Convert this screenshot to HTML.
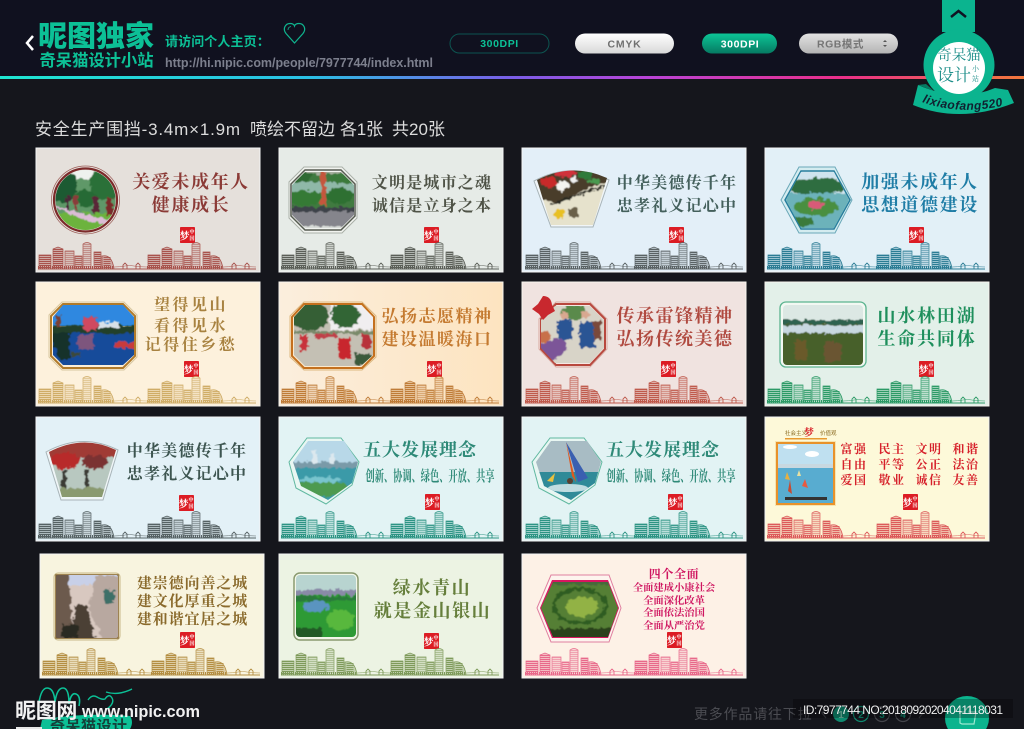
<!DOCTYPE html>
<html lang="zh"><head><meta charset="utf-8"><title>安全生产围挡</title>
<style>
html,body{margin:0;padding:0;background:#15161c;overflow:hidden}
svg{display:block}
.s{font-family:"Liberation Serif","Noto Serif CJK SC",serif;font-weight:700;text-anchor:middle}
.g{font-family:"Liberation Sans","Noto Sans CJK SC",sans-serif}
.l{font-size:18px;letter-spacing:1.6px}
.m{font-size:16px;letter-spacing:1.2px}
.st{font-family:"Noto Serif CJK SC",serif;font-weight:700;fill:#fff}
</style></head><body>
<svg xmlns="http://www.w3.org/2000/svg" width="1024" height="729" viewBox="0 0 1024 729">
<defs>
<linearGradient id="rb" x1="0" x2="1" y1="0" y2="0"><stop offset="0" stop-color="#1fe6d2"/><stop offset=".3" stop-color="#2ac0e6"/><stop offset=".5" stop-color="#7a5ee8"/><stop offset=".63" stop-color="#b844d8"/><stop offset=".82" stop-color="#ea2f8a"/><stop offset="1" stop-color="#f2783c"/></linearGradient>
<linearGradient id="pw" x1="0" x2="0" y1="0" y2="1"><stop offset="0" stop-color="#fff"/><stop offset="1" stop-color="#d8d8d8"/></linearGradient>
<linearGradient id="pg" x1="0" x2="0" y1="0" y2="1"><stop offset="0" stop-color="#0cc596"/><stop offset="1" stop-color="#067a62"/></linearGradient>
<linearGradient id="pr" x1="0" x2="0" y1="0" y2="1"><stop offset="0" stop-color="#e2e2e2"/><stop offset="1" stop-color="#b4b4b4"/></linearGradient>
<linearGradient id="o6" x1="0" x2="1" y1="0" y2="0"><stop offset="0" stop-color="#fbeedd"/><stop offset="1" stop-color="#fde4c0"/></linearGradient>
<filter id="bl" x="-5%" y="-5%" width="110%" height="110%"><feTurbulence type="fractalNoise" baseFrequency=".22" numOctaves="2" seed="4" result="n"/><feDisplacementMap in="SourceGraphic" in2="n" scale="7" xChannelSelector="R" yChannelSelector="G"/><feGaussianBlur stdDeviation=".45"/></filter>
<g id="blk">
<g fill="currentColor" opacity=".38"><rect x="1" y="13" width="12" height="14"/><path d="M15 7l5-2 5 2v20H15z"/><rect x="27" y="9" width="9" height="18" opacity=".6"/><rect x="37" y="14" width="7" height="13" opacity=".8"/><path d="M45 2q4-3 8 0v25h-8z" opacity=".5"/><rect x="56" y="10" width="7" height="17"/><path d="M64 27V14q10-2 12 13z"/></g>
<g fill="none" stroke="currentColor">
<path d="M1 13h12v14H1z" stroke-width=".7"/><path d="M7 13v14" stroke-width="12" stroke-dasharray="1 1"/>
<path d="M15 7l5-2 5 2v20H15z" stroke-width=".7"/><path d="M20 7v20" stroke-width="10" stroke-dasharray="1 1"/>
<path d="M27 9h9v18h-9z" stroke-width=".7"/><path d="M31.500 9v18" stroke-width="8" stroke-dasharray=".7 1.300" opacity=".6"/>
<path d="M37 14h7v13h-7z" stroke-width=".7"/><path d="M40.500 14v13" stroke-width="6" stroke-dasharray="1 1" opacity=".8"/>
<path d="M45 2q4-3 8 0v25h-8z" stroke-width=".7"/><path d="M49 2v25" stroke-width="7" stroke-dasharray=".7 1.300" opacity=".6"/>
<path d="M56 10h7v17h-7z" stroke-width=".7"/><path d="M59.500 10v17" stroke-width="6" stroke-dasharray="1 1"/>
<path d="M64 27V14q10-2 12 13z" stroke-width=".8"/><path d="M69 15v12" stroke-width="7" stroke-dasharray="1 1" opacity=".9"/>
<path d="M0 27h109" stroke-width="1"/>
<path d="M76 25q6 0 11-1t9 0q5 1 13 1" stroke-width=".5"/>
<path d="M85 27v-4l2-2 2 2v4M98 27v-4l2-2 2 2v4" stroke-width=".9"/>
<path d="M0 25.500h76" stroke-width="3" stroke-dasharray="1 1"/>
</g></g>
<g id="sk"><use href="#blk"/><use href="#blk" x="109"/></g>
<g id="stamp"><rect width="15" height="16" rx=".8" fill="#dc1c24"/><text class="st" x="-.5" y="12.500" font-size="10">梦</text><text class="st" x="9.500" y="6.500" font-size="5">中</text><text class="st" x="9.500" y="13" font-size="5">国</text></g>
<clipPath id="c1"><circle cx="85.500" cy="200" r="30"/></clipPath>
<clipPath id="c2"><path d="M305 172h36l13 13v30l-13 13h-36l-13-13v-30z"/></clipPath>
<clipPath id="c3"><path d="M537 180q35-18 70-2l-14 47h-42z"/></clipPath>
<clipPath id="c4"><path d="M786 200l15-28h33l15 28-15 28h-33z"/></clipPath>
<clipPath id="c5"><path d="M63 305h60l11 12v38l-11 10H63l-10-10v-38z"/></clipPath>
<clipPath id="c6"><path d="M305 305h56l12 12v38l-12 11h-56l-11-11v-38z"/></clipPath>
<clipPath id="c7"><path d="M555 306h35l14 14v28l-14 15h-35l-14-15v-28z"/></clipPath>
<clipPath id="c8"><rect x="783" y="305" width="80" height="60" rx="4"/></clipPath>
<clipPath id="c9"><path d="M49 452q34-18 67-2l-14 47H62z"/></clipPath>
<clipPath id="c10"><path d="M293 462l15-21h36l14 21-6 21-24 17-27-14z"/></clipPath>
<clipPath id="c11"><path d="M536 462l15-21h36l14 21-6 21-24 17-27-14z"/></clipPath>
<clipPath id="c13"><rect x="56" y="575" width="62" height="63" rx="2"/></clipPath>
<clipPath id="c14"><rect x="296" y="575" width="60" height="62" rx="4"/></clipPath>
<clipPath id="c15"><path d="M541 608l12-26h55l10 26-10 29h-55z"/></clipPath>
</defs>

<rect width="1024" height="729" fill="#15161c"/>
<rect width="1024" height="76" fill="#10111f"/>
<rect y="76" width="1024" height="3" fill="url(#rb)"/>

<!-- header -->
<path d="M33 36l-6 7 6 7" fill="none" stroke="#fff" stroke-width="2.500"/>
<text class="g" x="38" y="46" font-size="29" font-weight="900" fill="#0cc096">昵图独家</text>
<text class="g" x="39.500" y="66" font-size="16.300" font-weight="700" fill="#0cc096">奇呆猫设计小站</text>
<text class="g" x="165" y="46" font-size="13" font-weight="700" fill="#0cc096" letter-spacing=".1">请访问个人主页：</text>
<text class="g" x="165" y="67" font-size="12.500" font-weight="700" fill="#7c7f8d" textLength="268">http://hi.nipic.com/people/7977744/index.html</text>
<path d="M294.500 43L286 33.500C282 28 286 23.500 290 23.500C292.500 23.500 294 24.500 294.500 26C295 24.500 296.500 23.500 299 23.500C303 23.500 307 28 303 33.500Z" fill="none" stroke="#0fb58f" stroke-width="1.200"/>
<path d="M288 30q0-3 3-3.500" fill="none" stroke="#0fb58f" stroke-width=".8"/>

<rect x="450" y="34" width="99" height="19" rx="9.500" fill="none" stroke="#0d5450"/>
<text class="g" x="499.500" y="47" font-size="10.500" font-weight="700" fill="#0cc096" text-anchor="middle" letter-spacing=".6">300DPI</text>
<rect x="575" y="33.500" width="99" height="20" rx="10" fill="url(#pw)"/>
<text class="g" x="624.500" y="47.500" font-size="10.500" font-weight="700" fill="#707070" text-anchor="middle" letter-spacing=".8">CMYK</text>
<rect x="702" y="33.500" width="75" height="20" rx="10" fill="url(#pg)"/>
<text class="g" x="740" y="47.500" font-size="10.500" font-weight="700" fill="#fff" text-anchor="middle" letter-spacing=".6">300DPI</text>
<rect x="799" y="33.500" width="99" height="20" rx="10" fill="url(#pr)"/>
<text class="g" x="817" y="47.500" font-size="10.500" font-weight="700" fill="#757575" letter-spacing=".5">RGB模式</text>
<path d="M883 42l2-2 2 2zM883 45l2 2 2-2z" fill="#555"/>

<!-- badge -->
<rect x="942" y="0" width="33" height="32" fill="#0bb48f"/>
<path d="M951 17l7.500-6 7.500 6" fill="none" stroke="#101322" stroke-width="2.500"/>
<path d="M918 85L913 105Q960 124 1014 103L1008 90 995 88Q960 103 918 85z" fill="#0bb48f"/>
<path d="M918 85l8-1 8 7z" fill="#067a62"/>
<circle cx="959" cy="65" r="35.500" fill="#0bb48f"/>
<circle cx="959" cy="68" r="26" fill="#fff"/>
<text x="959" y="60" font-size="14.500" text-anchor="middle" fill="#1b8d88" font-family="Noto Serif CJK SC,serif">奇呆猫</text>
<text x="937" y="81" font-size="17" fill="#1b8d88" font-family="Noto Serif CJK SC,serif">设计</text>
<text x="972" y="71" font-size="7" fill="#1b8d88" font-family="Noto Serif CJK SC,serif">小</text>
<text x="972" y="81" font-size="7" fill="#1b8d88" font-family="Noto Serif CJK SC,serif">站</text>
<path id="rbn" d="M922 102Q960 116 1006 105" fill="none"/>
<text class="g" font-size="12" font-weight="700" fill="#102030" font-style="italic" letter-spacing=".5"><textPath href="#rbn">lixiaofang520</textPath></text>

<!-- title -->
<text class="g" x="35" y="135" font-size="17" fill="#dcdcdc" textLength="205">安全生产围挡-3.4m×1.9m</text>
<text class="g" x="250" y="135" font-size="17" fill="#dcdcdc" textLength="85">喷绘不留边</text>
<text class="g" x="340" y="135" font-size="17" fill="#dcdcdc" textLength="43">各1张</text>
<text class="g" x="392" y="135" font-size="17" fill="#dcdcdc" textLength="53">共20张</text>

<!-- CARD 1 -->
<rect x="36" y="148" width="224" height="124" fill="#e5e0db" stroke="#f4f4f4"/>
<circle cx="85.500" cy="200" r="34" fill="none" stroke="#9a5a55" stroke-width=".7"/>
<circle cx="85.500" cy="200" r="31.500" fill="none" stroke="#7c2a2a" stroke-width="2.200"/>
<g clip-path="url(#c1)"><g filter="url(#bl)"><rect x="45" y="160" width="82" height="80" fill="#5f9868"/><rect x="72" y="165" width="22" height="14" fill="#eef2ee"/><ellipse cx="62" cy="186" rx="15" ry="17" fill="#1f5a30"/><ellipse cx="106" cy="184" rx="16" ry="16" fill="#2c7038"/><ellipse cx="85" cy="198" rx="12" ry="8" fill="#276a34"/><rect x="45" y="213" width="82" height="27" fill="#6cb33c"/><path d="M55 205q30 10 65 17v5q-32-3-65-20z" fill="#dcbcd6"/><rect x="66" y="195" width="4" height="14" fill="#4a2838"/><rect x="73" y="196" width="4" height="13" fill="#8a3a3a"/><rect x="93" y="197" width="6" height="16" fill="#5a2838"/><rect x="106" y="197" width="7" height="18" fill="#7a2a2a"/></g></g>
<text class="s l" x="191" y="188" fill="#8b3a36">关爱未成年人</text>
<text class="s l" x="191" y="211" fill="#8b3a36">健康成长</text>
<use href="#stamp" x="180" y="227"/>
<use href="#sk" x="38" y="242" style="color:#a8524c"/>

<!-- CARD 2 -->
<rect x="279" y="148" width="224" height="124" fill="#e6ebe7" stroke="#f4f4f4"/>
<path d="M304 167h38l15 15v36l-15 15h-38l-15-15v-36z" fill="#f1f3ef" stroke="#aab0a8"/>
<path d="M305 170h36l14 14v32l-14 14h-36l-14-14v-32z" fill="none" stroke="#555b50" stroke-width="1.500"/>
<g clip-path="url(#c2)"><g filter="url(#bl)"><rect x="285" y="165" width="76" height="70" fill="#3f7a40"/><rect x="285" y="165" width="76" height="9" fill="#a8b0a0"/><rect x="285" y="182" width="76" height="10" fill="#8fb8a8"/><ellipse cx="300" cy="177" rx="12" ry="5" fill="#2f6a30"/><ellipse cx="342" cy="178" rx="12" ry="5" fill="#3a7a3a"/><ellipse cx="305" cy="198" rx="16" ry="8" fill="#357a34"/><ellipse cx="340" cy="196" rx="14" ry="8" fill="#2f7030"/><rect x="321" y="171" width="5" height="34" fill="#c4563c"/><rect x="285" y="207" width="76" height="5" fill="#3c4248"/><rect x="285" y="212" width="76" height="14" fill="#85858c"/><rect x="285" y="226" width="76" height="8" fill="#d8dcd8"/></g></g>
<text class="s m" x="432" y="188" fill="#4f5347">文明是城市之魂</text>
<text class="s m" x="432" y="211" fill="#4f5347">诚信是立身之本</text>
<use href="#stamp" x="424" y="227"/>
<use href="#sk" x="281" y="242" style="color:#5b5f58"/>

<!-- CARD 3 -->
<rect x="522" y="148" width="224" height="124" fill="#e3eff8" stroke="#f4f4f4"/>
<path d="M534 181q37-20 75-1l-16 47h-42z" fill="#f0f5f8" stroke="#a8b4b8"/>
<g clip-path="url(#c3)"><g filter="url(#bl)"><rect x="532" y="165" width="80" height="65" fill="#e6e2cc"/><path d="M532 165h80v15q-20 6-30 11t-24 12l-26-6z" fill="#4a3c2a"/><ellipse cx="549" cy="182" rx="9" ry="5" fill="#c82c2c"/><ellipse cx="566" cy="173" rx="11" ry="4" fill="#d0303a"/><ellipse cx="585" cy="175" rx="8" ry="4" fill="#2e7a3a"/><ellipse cx="562" cy="186" rx="7" ry="5" fill="#f4f4f0"/><ellipse cx="594" cy="181" rx="6" ry="3" fill="#4a9a50"/><ellipse cx="574" cy="180" rx="4" ry="3" fill="#f0f0f0"/><path d="M551 205q20-8 56-20" stroke="#2a2a24" stroke-width="2.500" fill="none"/><circle cx="559" cy="214" r="5" fill="#e8c020"/><rect x="569" y="208" width="9" height="9" fill="#6a604a"/></g></g>
<text class="s m" x="677" y="188" fill="#44605c">中华美德传千年</text>
<text class="s m" x="677" y="211" fill="#44605c">忠孝礼义记心中</text>
<use href="#stamp" x="669" y="227"/>
<use href="#sk" x="525" y="242" style="color:#5a6264"/>

<!-- CARD 4 -->
<rect x="765" y="148" width="224" height="124" fill="#e2f0f7" stroke="#f4f4f4"/>
<path d="M781 200l18-33h36l17 33-17 33h-36z" fill="#d4ecf0" stroke="#6aa8b8"/>
<path d="M785 200l16-29h33l16 29-16 29h-33z" fill="none" stroke="#267d9c" stroke-width="1.500"/>
<g clip-path="url(#c4)"><g filter="url(#bl)"><rect x="778" y="165" width="78" height="70" fill="#cfe4ee"/><ellipse cx="815" cy="186" rx="32" ry="8" fill="#2f6d40"/><rect x="778" y="193" width="78" height="40" fill="#6cb2ba"/><ellipse cx="816" cy="207" rx="22" ry="9" fill="#4a8f40"/><ellipse cx="816" cy="205" rx="8" ry="4" fill="#d85a78"/><ellipse cx="800" cy="222" rx="14" ry="5" fill="#3a7a3a"/></g></g>
<text class="s l" x="920" y="188" fill="#1f7da6">加强未成年人</text>
<text class="s l" x="920" y="211" fill="#1f7da6">思想道德建设</text>
<use href="#stamp" x="909" y="227"/>
<use href="#sk" x="767" y="242" style="color:#2b7c94"/>

<!-- CARD 5 -->
<rect x="36" y="282" width="224" height="124" fill="#fdf1dc" stroke="#f7f4ee"/>
<path d="M62 302h62l13 13v42l-13 13H62l-13-13v-42z" fill="#fbeed8" stroke="#d8c8a0"/>
<path d="M63 304h60l12 12v40l-12 12H63l-12-12v-40z" fill="none" stroke="#b07a2a" stroke-width="2"/>
<g clip-path="url(#c5)"><rect x="52" y="304" width="84" height="22" fill="#2f88e0"/><g filter="url(#bl)"><rect x="48" y="325" width="92" height="9" fill="#243f2c"/><rect x="56" y="315" width="6" height="12" fill="#7a4034"/><rect x="83" y="317" width="14" height="13" fill="#d04a60"/><rect x="98" y="322" width="22" height="6" fill="#d8e0e8"/><rect x="48" y="333" width="92" height="36" fill="#184c9a"/><path d="M48 333h22v26H60z" fill="#12302a"/><rect x="78" y="335" width="16" height="14" fill="#a85a70" opacity=".7"/><rect x="115" y="342" width="22" height="6" fill="#c83a3a"/><rect x="71" y="352" width="8" height="5" fill="#3a4a3a"/></g></g>
<text class="s" x="191" y="310" font-size="16" letter-spacing="2.500" fill="#a88240">望得见山</text>
<text class="s" x="191" y="331" font-size="16" letter-spacing="2.500" fill="#a88240">看得见水</text>
<text class="s" x="191" y="350" font-size="16" letter-spacing="2.500" fill="#a88240">记得住乡愁</text>
<use href="#stamp" x="184" y="361"/>
<use href="#sk" x="38" y="376" style="color:#cfac66"/>

<!-- CARD 6 -->
<rect x="279" y="282" width="224" height="124" fill="url(#o6)" stroke="#f7f4ee"/>
<path d="M304 302h58l14 14v41l-14 13h-58l-14-13v-41z" fill="#fbe9cd" stroke="#dcb880"/>
<path d="M304 304h58l12 13v39l-12 12h-58l-12-12v-39z" fill="none" stroke="#c4701e" stroke-width="2"/>
<g clip-path="url(#c6)"><g filter="url(#bl)"><rect x="288" y="300" width="92" height="72" fill="#c4c0b4"/><rect x="330" y="300" width="50" height="30" fill="#f0eef0"/><ellipse cx="310" cy="316" rx="19" ry="15" fill="#355f34"/><ellipse cx="345" cy="315" rx="14" ry="13" fill="#316536"/><rect x="288" y="331" width="92" height="3" fill="#7a8a6a"/><rect x="300" y="335" width="8" height="16" fill="#c8303a"/><rect x="338" y="337" width="13" height="22" fill="#c8282e"/><rect x="362" y="334" width="9" height="15" fill="#b8303a"/><rect x="315" y="334" width="22" height="4" fill="#c04048"/><rect x="355" y="354" width="16" height="10" fill="#3a5a3a"/></g></g>
<text class="s" x="437" y="322" font-size="17" letter-spacing="1.500" fill="#c47a30">弘扬志愿精神</text>
<text class="s" x="437" y="345" font-size="17" letter-spacing="1.500" fill="#c47a30">建设温暖海口</text>
<use href="#stamp" x="427" y="361"/>
<use href="#sk" x="281" y="376" style="color:#bf7c38"/>

<!-- CARD 7 -->
<rect x="522" y="282" width="224" height="124" fill="#f0e3e0" stroke="#f7f4ee"/>
<path d="M556 302h34l17 17v30l-17 18h-34l-17-18v-30z" fill="#f5e8e4" stroke="#d8a8a0"/>
<path d="M556 304h34l15 15v30l-15 16h-34l-15-16v-30z" fill="none" stroke="#b8483e" stroke-width="2"/>
<g clip-path="url(#c7)"><g filter="url(#bl)"><rect x="536" y="300" width="74" height="68" fill="#d8d4c8"/><ellipse cx="574" cy="312" rx="12" ry="8" fill="#5a8a4c"/><rect x="558" y="320" width="14" height="20" fill="#2a5494"/><rect x="580" y="322" width="15" height="26" fill="#2a5494"/><circle cx="565" cy="316" r="4" fill="#d8a890"/><circle cx="585" cy="315" r="4" fill="#d8a890"/><rect x="593" y="320" width="8" height="20" fill="#7a4a3a"/><path d="M538 345l24-9 6 13-18 14h-12z" fill="#7c5498"/><circle cx="544" cy="337" r="6" fill="#c87048"/></g></g>
<path d="M543 296q8 0 9 9l3 6-7 4-5 5-4-6-7-5 6-5z" fill="#c8282e"/>
<text class="s" x="675" y="322" font-size="18" letter-spacing="1.500" fill="#b04a40">传承雷锋精神</text>
<text class="s" x="675" y="345" font-size="18" letter-spacing="1.500" fill="#b04a40">弘扬传统美德</text>
<use href="#stamp" x="661" y="361"/>
<use href="#sk" x="525" y="376" style="color:#bf5a4c"/>

<!-- CARD 8 -->
<rect x="765" y="282" width="224" height="124" fill="#e3f0e9" stroke="#f7f4ee"/>
<rect x="780" y="302" width="86" height="65" rx="6" fill="#f2f8f2" stroke="#5cb490" stroke-width="1.300"/>
<g clip-path="url(#c8)"><g filter="url(#bl)"><rect x="780" y="303" width="86" height="66" fill="#46602c"/><rect x="780" y="303" width="86" height="17" fill="#dce8e4"/><rect x="780" y="320" width="86" height="4" fill="#2f6250"/><rect x="780" y="325" width="86" height="8" fill="#c8d8e0"/><rect x="795" y="340" width="12" height="20" fill="#6a5a2a"/><rect x="825" y="342" width="16" height="20" fill="#6a5430"/></g></g>
<text class="s" x="927" y="322" font-size="18" letter-spacing="1.800" fill="#1e8f5c">山水林田湖</text>
<text class="s" x="927" y="345" font-size="18" letter-spacing="1.800" fill="#1e8f5c">生命共同体</text>
<use href="#stamp" x="919" y="361"/>
<use href="#sk" x="767" y="376" style="color:#2c9a66"/>

<!-- CARD 9 -->
<rect x="36" y="417" width="224" height="124" fill="#e3f1f7" stroke="#f4f4f4"/>
<path d="M46 452q36-20 72-2l-15 50H61z" fill="#f0f6f8" stroke="#a8b4b8"/>
<g clip-path="url(#c9)"><g filter="url(#bl)"><rect x="44" y="435" width="78" height="68" fill="#b8c8c0"/><rect x="44" y="435" width="78" height="23" fill="#a03a34"/><ellipse cx="65" cy="461" rx="15" ry="8" fill="#b82a2a"/><ellipse cx="95" cy="462" rx="13" ry="7" fill="#7a3030"/><rect x="62" y="470" width="4" height="28" fill="#3a3a34"/><rect x="85" y="470" width="4" height="28" fill="#3a3a34"/><rect x="44" y="488" width="78" height="14" fill="#8a9a70"/></g></g>
<text class="s m" x="187" y="456" fill="#3d5550">中华美德传千年</text>
<text class="s m" x="187" y="479" fill="#3d5550">忠孝礼义记心中</text>
<use href="#stamp" x="179" y="495"/>
<use href="#sk" x="38" y="511" style="color:#566264"/>

<!-- CARD 10 -->
<rect x="279" y="417" width="224" height="124" fill="#e2f3f4" stroke="#f4f4f4"/>
<path d="M289 462l18-24h34l18 24-7 23-26 19-30-16z" fill="#e8f6f2" stroke="#60b8a0"/>
<g clip-path="url(#c10)"><g filter="url(#bl)"><rect x="286" y="435" width="76" height="72" fill="#b8d8e8"/><rect x="286" y="462" width="76" height="6" fill="#7a9aa8"/><rect x="312" y="450" width="5" height="14" fill="#dce8ee"/><rect x="330" y="454" width="4" height="10" fill="#dce8ee"/><rect x="286" y="468" width="76" height="38" fill="#3a9aa8"/><ellipse cx="320" cy="489" rx="30" ry="8" fill="#4e9a50"/><ellipse cx="320" cy="480" rx="22" ry="3" fill="#78c4ce"/></g></g>
<text class="s" x="420" y="456" font-size="18" letter-spacing="1" fill="#2f8a78">五大发展理念</text>
<text class="s" x="430" y="481" font-size="15" fill="#2f8a78" textLength="129" lengthAdjust="spacingAndGlyphs">创新、协调、绿色、开放、共享</text>
<use href="#stamp" x="425" y="494"/>
<use href="#sk" x="281" y="511" style="color:#2d9484"/>

<!-- CARD 11 -->
<rect x="522" y="417" width="224" height="124" fill="#e2f3f4" stroke="#f4f4f4"/>
<path d="M532 462l18-24h34l18 24-7 23-26 19-30-16z" fill="#e8f6f2" stroke="#60b8a0"/>
<g clip-path="url(#c11)"><rect x="530" y="436" width="74" height="38" fill="#a8bcc4"/><rect x="530" y="472" width="74" height="34" fill="#2f8a98"/><ellipse cx="568" cy="488" rx="20" ry="4" fill="#c0dce0"/><path d="M566 442l22 36-10 4z" fill="#3a5fb0"/><path d="M566 442l6 34 4 6z" fill="#e0581e"/><circle cx="570" cy="481" r="3" fill="#5a4030"/><path d="M555 473l-8 8 6 1z" fill="#e8c040"/></g>
<text class="s" x="663" y="456" font-size="18" letter-spacing="1" fill="#2f8a78">五大发展理念</text>
<text class="s" x="671" y="481" font-size="15" fill="#2f8a78" textLength="129" lengthAdjust="spacingAndGlyphs">创新、协调、绿色、开放、共享</text>
<use href="#stamp" x="668" y="494"/>
<use href="#sk" x="525" y="511" style="color:#2d9484"/>

<!-- CARD 12 -->
<rect x="765" y="417" width="224" height="124" fill="#fdf9d9" stroke="#f4f4f4"/>
<text x="785" y="435" font-size="5.500" fill="#8a6a20" font-family="Noto Sans CJK SC,sans-serif">社会主义</text>
<text x="804" y="436" font-size="10" fill="#d8232a" font-family="Noto Serif CJK SC,serif" font-weight="700">梦</text>
<text x="820" y="435" font-size="5.500" fill="#8a6a20" font-family="Noto Sans CJK SC,sans-serif">价值观</text>
<rect x="785" y="438" width="42" height="1.500" fill="#e89a30"/>
<rect x="775" y="441" width="61" height="65" fill="#f6e4b0"/>
<rect x="777" y="443" width="57" height="61" fill="#f8efc8" stroke="#e8922a" stroke-width="2"/>
<rect x="778" y="444" width="55" height="59" fill="#bfe0f0"/><ellipse cx="790" cy="447" rx="7" ry="2" fill="#fff"/><ellipse cx="812" cy="454" rx="7" ry="3" fill="#fff"/><rect x="778" y="464" width="55" height="4" fill="#c8d8e0"/><rect x="778" y="468" width="55" height="35" fill="#58acd0"/><path d="M787 472l3 8-5-1z" fill="#e8b040"/><path d="M799 470l2 6-4 0z" fill="#e8e0a0"/><path d="M805 479l3 9-6-2z" fill="#e85a40"/><path d="M790 480l2 14-4-3z" fill="#c84a30"/><rect x="785" y="497" width="42" height="3" fill="#333"/>
<g class="s" font-size="12" fill="#d6202a" letter-spacing="1.500">
<text x="854" y="453">富强</text><text x="892" y="453">民主</text><text x="929" y="453">文明</text><text x="966" y="453">和谐</text>
<text x="854" y="468.500">自由</text><text x="892" y="468.500">平等</text><text x="929" y="468.500">公正</text><text x="966" y="468.500">法治</text>
<text x="854" y="484">爱国</text><text x="892" y="484">敬业</text><text x="929" y="484">诚信</text><text x="966" y="484">友善</text>
</g>
<use href="#stamp" x="903" y="494"/>
<use href="#sk" x="767" y="511" style="color:#dc5a5a"/>

<!-- CARD 13 -->
<rect x="40" y="554" width="224" height="124" fill="#f8f4df" stroke="#f4f4f4"/>
<rect x="54" y="573" width="66" height="67" rx="4" fill="#f4ecd0" stroke="#c8b888"/>
<rect x="56" y="575" width="62" height="63" fill="none" stroke="#806028" stroke-width="1.500"/>
<g clip-path="url(#c13)"><g filter="url(#bl)"><rect x="52" y="571" width="70" height="70" fill="#d8c8c0"/><rect x="52" y="571" width="70" height="14" fill="#c8d0e8"/><path d="M52 571h16l6 70H52z" fill="#6c5a4e"/><path d="M122 576h-26l-8 32 16 33h18z" fill="#b8a8a0"/><rect x="104" y="590" width="10" height="14" fill="#3e7068"/><path d="M76 605h10l10 36H70z" fill="#4c4034"/><rect x="62" y="624" width="16" height="14" fill="#2a2a20"/></g></g>
<text class="s" x="192.500" y="588" font-size="15" letter-spacing=".9" fill="#8a6a2c">建崇德向善之城</text>
<text class="s" x="192.500" y="606" font-size="15" letter-spacing=".9" fill="#8a6a2c">建文化厚重之城</text>
<text class="s" x="192.500" y="624" font-size="15" letter-spacing=".9" fill="#8a6a2c">建和谐宜居之城</text>
<use href="#stamp" x="180" y="632"/>
<use href="#sk" x="42" y="648" style="color:#b48e42"/>

<!-- CARD 14 -->
<rect x="279" y="554" width="224" height="124" fill="#ecf3e3" stroke="#f4f4f4"/>
<rect x="294" y="573" width="64" height="67" rx="6" fill="#f2f6e8" stroke="#8a9a70" stroke-width="1.500"/>
<g clip-path="url(#c14)"><g filter="url(#bl)"><rect x="292" y="571" width="68" height="70" fill="#2f9a34"/><rect x="292" y="571" width="68" height="19" fill="#b8d4d0"/><rect x="292" y="590" width="68" height="5" fill="#8a8aa8"/><ellipse cx="316" cy="606" rx="13" ry="6" fill="#5a94c0"/><ellipse cx="340" cy="620" rx="14" ry="10" fill="#58b83c"/><rect x="292" y="628" width="30" height="12" fill="#245a28"/><rect x="292" y="596" width="68" height="5" fill="#2a7a3a"/></g></g>
<text class="s l" x="432" y="594" fill="#667f3c">绿水青山</text>
<text class="s l" x="432.500" y="617" fill="#667f3c">就是金山银山</text>
<use href="#stamp" x="424" y="633"/>
<use href="#sk" x="281" y="648" style="color:#7e9a5a"/>

<!-- CARD 15 -->
<rect x="522" y="554" width="224" height="124" fill="#fdf1e6" stroke="#f4f4f4"/>
<path d="M537 608l14-33h58l12 33-12 34h-58z" fill="#fdf4ee" stroke="#e080a0"/>
<path d="M540 608l12-28h56l11 28-11 30h-56z" fill="#d81660"/>
<g clip-path="url(#c15)"><g filter="url(#bl)"><rect x="536" y="576" width="88" height="66" fill="#557f34"/><ellipse cx="580" cy="606" rx="26" ry="17" fill="none" stroke="#2f5c22" stroke-width="3"/><ellipse cx="582" cy="607" rx="16" ry="10" fill="#92b244"/><rect x="536" y="578" width="88" height="7" fill="#46683a"/><rect x="536" y="628" width="88" height="12" fill="#2a421c"/></g></g>
<text class="s" x="674" y="578" font-size="12" letter-spacing=".6" fill="#cf1560">四个全面</text>
<g class="s" font-size="10.300" fill="#cf1560"><text x="674" y="591">全面建成小康社会</text><text x="674" y="604">全面深化改革</text><text x="674" y="616">全面依法治国</text><text x="674" y="629">全面从严治党</text></g>
<use href="#stamp" x="667" y="632"/>
<use href="#sk" x="525" y="648" style="color:#e8688a"/>

<!-- bottom left -->
<path d="M38 710q2-22 9-22t8 14q2-14 8-14t6 16q2-12 7-10t3 12" fill="none" stroke="#0cc096" stroke-width="1.600"/>
<path d="M88 700q4-6 9-3t8 2q4-6 7-1t-5 11M106 692q12 4 26-3" fill="none" stroke="#0cc096" stroke-width="1.400"/>
<path d="M42 720q40-8 88-4 4 6 0 13H40z" fill="#0cc096"/>
<text class="g" x="50" y="731" font-size="15" font-weight="700" fill="#15403a" letter-spacing=".5">奇呆猫设计</text>
<text class="g" x="15" y="718" font-size="21" font-weight="700" fill="#f2f2f2" letter-spacing="-.3">昵图网</text>
<text class="g" x="82" y="717" font-size="17" font-weight="700" fill="#f2f2f2" textLength="118" lengthAdjust="spacingAndGlyphs">www.nipic.com</text>
<rect x="16" y="727" width="26" height="2" fill="#e8e8e8"/>

<!-- bottom right -->
<text class="g" x="694" y="719" font-size="14" fill="#4b4c52" letter-spacing=".8">更多作品请往下拉</text>
<path d="M826 708l-4 5 4 5" fill="none" stroke="#3d3e44" stroke-width="1.200"/>
<circle cx="841" cy="714" r="8" fill="#0f8a70"/>
<circle cx="861" cy="714" r="7.500" fill="none" stroke="#0f8a70" stroke-width="1.200"/>
<circle cx="882" cy="714" r="7.500" fill="none" stroke="#44454b" stroke-width="1.200"/>
<circle cx="903" cy="714" r="7.500" fill="none" stroke="#44454b" stroke-width="1.200"/>
<text class="g" x="841" y="718" font-size="10" fill="#7ac8b0" text-anchor="middle" font-weight="700">1</text>
<text class="g" x="861" y="718" font-size="10" fill="#0f9a7c" text-anchor="middle" font-weight="700">2</text>
<text class="g" x="882" y="718" font-size="10" fill="#0f8a70" text-anchor="middle" font-weight="700">3</text>
<text class="g" x="903" y="718" font-size="10" fill="#0f8a70" text-anchor="middle" font-weight="700">4</text>
<path d="M919 708l4 5-4 5" fill="none" stroke="#3d3e44" stroke-width="1.200"/>
<circle cx="967" cy="718" r="22" fill="#0cb48e"/>
<path d="M960 712h4l4-5 2 1-1 4h7l-2 12h-12l-2-1z" fill="none" stroke="#9ce8d0" stroke-width="1.200"/>
<rect x="793" y="699" width="220" height="19" fill="#000" opacity=".28"/>
<text class="g" x="803" y="714" font-size="12" fill="#f0f0f0" textLength="200">ID:7977744 NO:20180920204041118031</text>
</svg>
</body></html>
